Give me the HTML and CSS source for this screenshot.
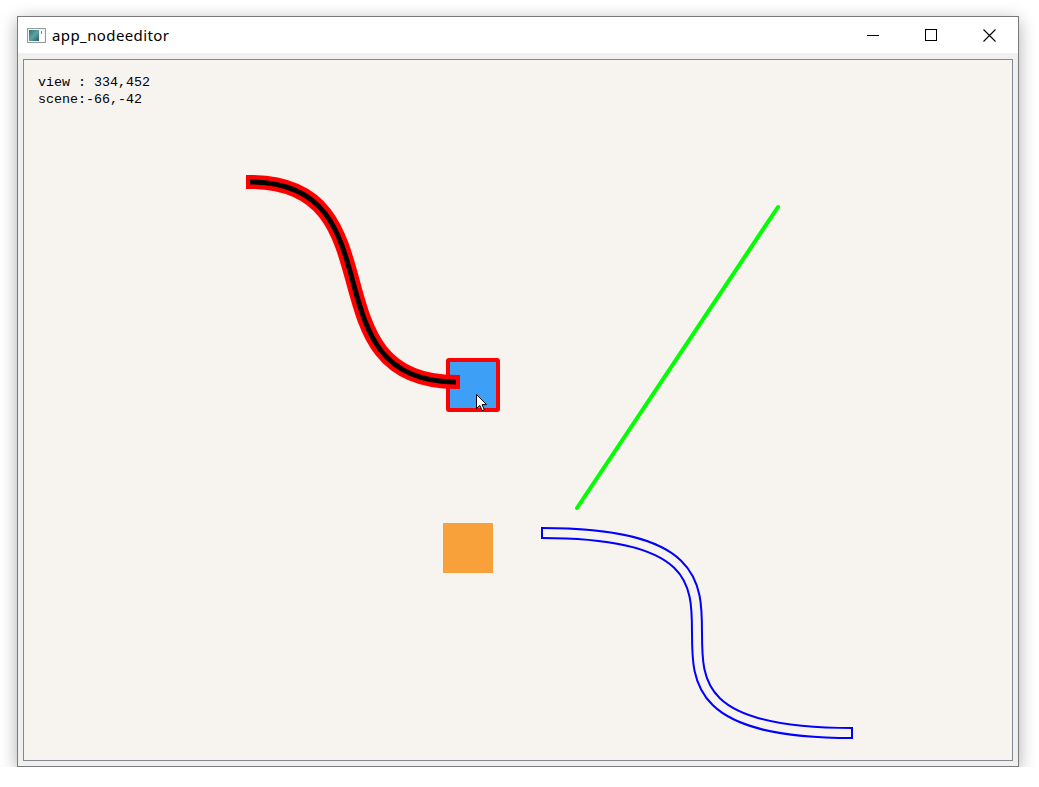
FILE: index.html
```html
<!DOCTYPE html>
<html>
<head>
<meta charset="utf-8">
<title>app_nodeeditor</title>
<link rel="stylesheet" href="styles.css">
</head>
<body>
<div class="window">
  <div class="titlebar">
    <div class="title">
      <svg class="app-icon" width="19" height="15" viewBox="0 0 19 15">
        <defs>
          <linearGradient id="ig" x1="0" y1="0" x2="1" y2="1">
            <stop offset="0" stop-color="#2f6f78"/>
            <stop offset="0.5" stop-color="#5aa5a0"/>
            <stop offset="1" stop-color="#2b5a63"/>
          </linearGradient>
        </defs>
        <rect x="0.5" y="0.5" width="18" height="14" fill="#f4f4f4" stroke="#9a9a9a"/>
        <rect x="2" y="2" width="10" height="11" fill="url(#ig)"/>
        <rect x="13" y="2" width="4" height="11" fill="#ffffff"/>
        <rect x="14" y="3" width="1" height="3" fill="#7a8a90"/>
      </svg>
      <span class="title-text">app_nodeeditor</span>
    </div>
    <div class="controls">
      <div class="cbtn">
        <svg width="12" height="12" viewBox="0 0 12 12"><rect x="0" y="6" width="12" height="1" fill="#000"/></svg>
      </div>
      <div class="cbtn">
        <svg width="12" height="12" viewBox="0 0 12 12"><rect x="0.5" y="0.5" width="11" height="11" fill="none" stroke="#000"/></svg>
      </div>
      <div class="cbtn">
        <svg width="13" height="13" viewBox="0 0 13 13"><path d="M0.5 0.5 L12.5 12.5 M12.5 0.5 L0.5 12.5" stroke="#000" stroke-width="1.1" fill="none"/></svg>
      </div>
    </div>
  </div>
  <div class="client">
    <div class="view">
      <div class="info">view : 334,452<br>scene:-66,-42</div>
      <svg class="scene" width="988" height="700" viewBox="24 60 988 700">
        <!-- orange item -->
        <rect x="443" y="523" width="50" height="50" fill="#f8a13b"/>
        <!-- green line -->
        <line x1="577" y1="508" x2="778" y2="207" stroke="#00ff00" stroke-width="4" stroke-linecap="round"/>
        <!-- blue outlined curve -->
        <path d="M542 533 C852 533 542 733 852 733" fill="none" stroke="#0000ff" stroke-width="12"/>
        <path d="M542 533 C852 533 542 733 852 733" fill="none" stroke="#f7f3ee" stroke-width="8"/>
        <line x1="542" y1="527" x2="542" y2="539" stroke="#0000ff" stroke-width="2"/>
        <line x1="852" y1="727" x2="852" y2="739" stroke="#0000ff" stroke-width="2"/>
        <!-- blue node -->
        <rect x="448" y="360" width="50" height="50" rx="1" fill="#3d9ff5" stroke="#ff0000" stroke-width="4" stroke-linejoin="round"/>
        <!-- red/black curve -->
        <path d="M246 182 L250 182 C402 182 304 382 456 382 L460 382" fill="none" stroke="#ff0000" stroke-width="14" stroke-linejoin="round"/>
        <path d="M250 182 C402 182 304 382 456 382" fill="none" stroke="#000000" stroke-width="5"/>
        <!-- mouse cursor -->
        <path d="M476.5 394.5 L476.5 408.5 L479.8 405.4 L482.2 410.6 L484.3 409.7 L482 404.6 L486.5 404.6 Z" fill="#ffffff" stroke="#000000" stroke-width="1" stroke-linejoin="round"/>
      </svg>
    </div>
  </div>
</div>
</body>
</html>
```

FILE: styles.css
```css
html, body {
  margin: 0;
  background: #ffffff;
}

body {
  padding: 16px 0 0 17px;
}

.window {
  width: 1000px;
  height: 749px;
  border: 1px solid #7a7a7a;
  background: #f0f0f0;
  display: flex;
  flex-direction: column;
  box-shadow: 0 4px 16px rgba(0, 0, 0, 0.32);
}

.titlebar {
  height: 36px;
  background: #ffffff;
  display: flex;
  align-items: stretch;
  justify-content: space-between;
}

.title {
  display: flex;
  align-items: center;
  padding-left: 9px;
}

.app-icon {
  display: block;
}

.title-text {
  margin-left: 6px;
  font-family: "Noto Sans", "Open Sans", sans-serif;
  font-size: 15px;
  letter-spacing: 0.4px;
  color: #000000;
}

.controls {
  display: flex;
}

.cbtn {
  width: 58px;
  display: flex;
  align-items: center;
  justify-content: center;
}

.cbtn svg {
  display: block;
}

.client {
  flex: 1;
  display: flex;
  padding: 6px 5px 5px 5px;
}

.view {
  flex: 1;
  position: relative;
  border: 1px solid #828790;
  background: #f7f3ee;
  overflow: hidden;
}

.info {
  padding: 14px 0 0 14px;
  font-family: "Liberation Mono", monospace;
  font-size: 13.33px;
  line-height: 17px;
  color: #000000;
  position: relative;
  z-index: 1;
}

.scene {
  position: absolute;
  left: 0;
  top: 0;
  display: block;
}
```
